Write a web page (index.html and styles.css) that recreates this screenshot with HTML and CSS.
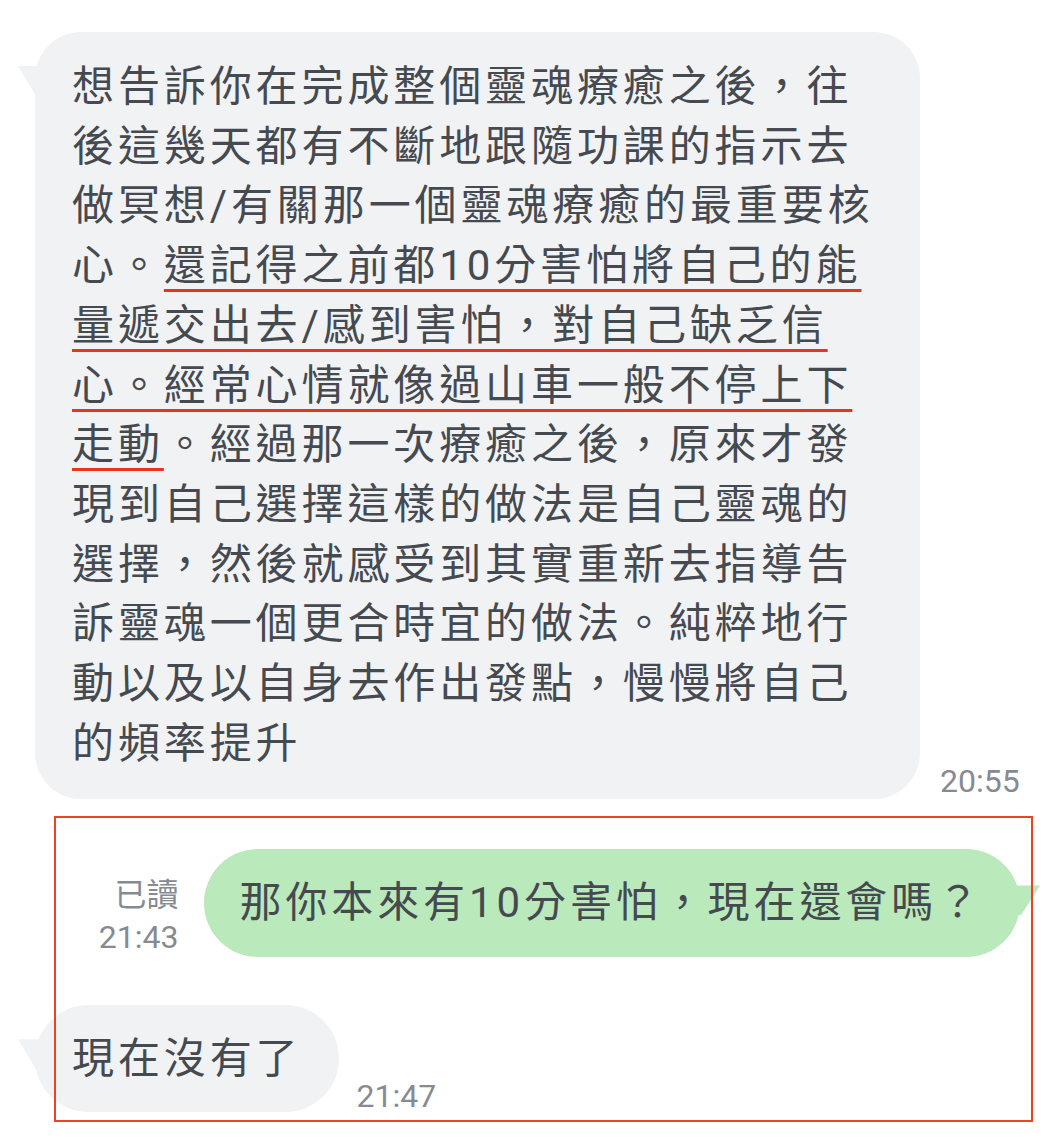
FILE: index.html
```html
<!DOCTYPE html>
<html lang="zh-Hant">
<head>
<meta charset="utf-8">
<link rel="stylesheet" href="styles.css">
</head>
<body>
<div class="chat">
  <div class="row in first">
    <div class="bubble gray big">想告訴你在完成整個靈魂療癒之後，往<br>後這幾天都有不斷地跟隨功課的指示去<br>做冥想/有關那一個靈魂療癒的最重要核<br>心。<span class="ul">還記得之前都10分害怕將自己的能</span><br><span class="ul">量遞交出去/感到害怕，對自己缺乏信</span><br><span class="ul ul-wide">心。經常心情就像過山車一般不停上下</span><br><span class="ul ul-wide">走動</span>。經過那一次療癒之後，原來才發<br>現到自己選擇這樣的做法是自己靈魂的<br>選擇，然後就感受到其實重新去指導告<br>訴靈魂一個更合時宜的做法。純粹地行<br>動以及以自身去作出發點，慢慢將自己<br>的頻率提升</div>
    <div class="time t1">20:55</div>
  </div>
  <div class="row out">
    <div class="meta">
      <div>已讀</div>
      <div>21:43</div>
    </div>
    <div class="bubble green">那你本來有10分害怕，現在還會嗎？</div>
  </div>
  <div class="row in">
    <div class="bubble gray small">現在沒有了</div>
    <div class="time t3">21:47</div>
  </div>
  <div class="mark"></div>
</div>
</body>
</html>
```
FILE: styles.css
```css
html, body {
  margin: 0;
  padding: 0;
  background: #ffffff;
}
body {
  width: 1046px;
  height: 1138px;
  overflow: hidden;
  font-family: Roboto, "Noto Sans CJK TC", sans-serif;
  color: #454a50;
}
.chat {
  position: relative;
  padding: 32px 0 0 35px;
  display: flex;
  flex-direction: column;
}
.row {
  display: flex;
  align-items: flex-end;
}
.row.out {
  margin-top: 50px;
  justify-content: flex-end;
  padding-right: 26px;
}
.row.in + .row.in,
.row.out + .row.in {
  margin-top: 48px;
}
.bubble {
  position: relative;
  font-size: 42px;
  letter-spacing: 3.9px;
  line-height: 59.7px;
  white-space: nowrap;
}
.gray {
  background: #f1f2f4;
}
.green {
  background: #bae9bb;
}
.gray::before {
  content: "";
  position: absolute;
  left: -17px;
  top: 34px;
  width: 30px;
  height: 30px;
  background: #f1f2f4;
  clip-path: polygon(0 0, 100% 0, 100% 100%, 60% 100%);
}
.green::after {
  content: "";
  position: absolute;
  right: -20px;
  top: 36px;
  width: 32px;
  height: 30px;
  background: #bae9bb;
  clip-path: polygon(0 0, 100% 0, 40% 100%, 0 100%);
}
.big {
  width: 848px;
  padding: 25px 0 26px 37px;
  border-radius: 46px;
}
.green {
  padding: 24px 37px 24px 35px;
  border-radius: 54px;
}
.small {
  padding: 24px 37px 23px 37px;
  border-radius: 54px;
}
.ul {
  text-decoration: underline;
  text-decoration-color: #e8341c;
  text-decoration-thickness: 3px;
  text-underline-offset: 9px;
}
.time {
  font-size: 32px;
  color: #868b92;
  line-height: 40px;
}
.t1 {
  margin-left: 20px;
  margin-bottom: -2px;
}
.t3 {
  margin-left: 18px;
  margin-bottom: -4px;
}
.meta {
  font-size: 32px;
  color: #868b92;
  line-height: 42px;
  text-align: right;
  margin-right: 26px;
  margin-bottom: -1px;
}
.mark {
  position: absolute;
  left: 54px;
  top: 816px;
  width: 975px;
  height: 302px;
  border: 2.5px solid #ec4323;
  pointer-events: none;
}
```
